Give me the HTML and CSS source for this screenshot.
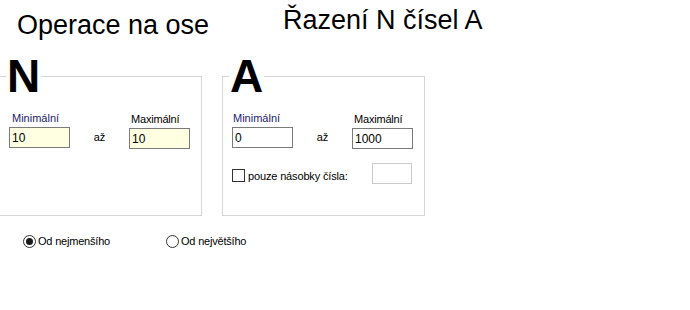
FILE: index.html
```html
<!DOCTYPE html>
<html lang="cs">
<head>
<meta charset="utf-8">
<title>Řazení N čísel A</title>
<link rel="stylesheet" href="styles.css">
</head>
<body>
<div class="header">
  <div class="t1">Operace na ose</div>
  <div class="t2">Řazení N čísel A</div>
</div>
<div class="groups">
  <fieldset class="grp">
    <legend>N</legend>
    <div class="body">
      <div class="row">
        <div class="col">
          <label class="lbl min n">Minimální</label>
          <input class="inp yellow" type="text" value="10">
        </div>
        <div class="az">až</div>
        <div class="col max">
          <label class="lbl">Maximální</label>
          <input class="inp yellow" type="text" value="10">
        </div>
      </div>
    </div>
  </fieldset>
  <fieldset class="grp">
    <legend>A</legend>
    <div class="body">
      <div class="row">
        <div class="col">
          <label class="lbl min">Minimální</label>
          <input class="inp" type="text" value="0">
        </div>
        <div class="az">až</div>
        <div class="col max">
          <label class="lbl">Maximální</label>
          <input class="inp" type="text" value="1000">
        </div>
      </div>
      <div class="chkrow">
        <span class="chk"></span>
        <span class="chklbl">pouze násobky čísla:</span>
        <input class="small" type="text" value="">
      </div>
    </div>
  </fieldset>
</div>
<div class="radios">
  <div class="opt first"><span class="radio on"></span><span class="rlbl">Od nejmenšího</span></div>
  <div class="opt"><span class="radio"></span><span class="rlbl">Od největšího</span></div>
</div>
</body>
</html>
```
FILE: styles.css
```css
html, body {
  margin: 0;
  padding: 0;
  background: #ffffff;
  color: #000000;
  font-family: "Liberation Sans", Arial, sans-serif;
}

.header {
  display: grid;
  grid-template-columns: 283px auto;
  height: 53px;
  font-size: 27px;
  line-height: 27px;
}

.t1 {
  padding-left: 17px;
  margin-top: 12px;
}

.t2 {
  margin-top: 7px;
}

.groups {
  display: flex;
  gap: 20px;
  margin-left: -1px;
}

.grp {
  width: 203px;
  box-sizing: border-box;
  margin: 0;
  padding: 0;
  min-width: 0;
  border: 1px solid #d5d5d5;
}

.grp legend {
  margin-left: 6px;
  padding: 0 1px;
  font-weight: bold;
  font-size: 46px;
  line-height: 46px;
}

.body {
  box-sizing: border-box;
  height: 116px;
  padding: 13px 0 0 9px;
}

.row {
  display: flex;
  align-items: flex-start;
}

.col {
  width: 61px;
}

.col.max {
  margin-top: 1px;
}

.az {
  width: 59px;
  align-self: flex-end;
  margin-bottom: 5px;
  text-align: center;
  font-size: 11px;
  line-height: 13px;
}

.lbl {
  display: block;
  font-size: 11px;
  line-height: 13px;
  letter-spacing: -0.2px;
  padding-left: 2px;
  white-space: nowrap;
}

.lbl.min {
  color: #1c2270;
  padding-left: 1px;
  letter-spacing: 0;
}

.lbl.min.n {
  padding-left: 3px;
}

.inp {
  display: block;
  width: 61px;
  height: 21px;
  box-sizing: border-box;
  margin: 2px 0 0 0;
  padding: 0 0 0 2px;
  border: 1px solid #7a7a7a;
  border-radius: 0;
  background: #ffffff;
  font-family: "Liberation Sans", Arial, sans-serif;
  font-size: 12px;
  color: #000000;
  outline: none;
}

.inp.yellow {
  background: #ffffe1;
}

.chkrow {
  display: flex;
  align-items: flex-end;
  width: 181px;
  margin-top: 14px;
}

.chk {
  width: 13px;
  height: 13px;
  box-sizing: border-box;
  border: 1px solid #333333;
  background: #ffffff;
  margin-bottom: 2px;
  flex: none;
}

.chklbl {
  font-size: 11px;
  line-height: 13px;
  letter-spacing: -0.15px;
  margin-left: 3px;
  margin-bottom: 1px;
  white-space: nowrap;
}

.small {
  margin-left: auto;
  margin-right: 1px;
  width: 40px;
  height: 21px;
  box-sizing: border-box;
  padding: 0;
  border: 1px solid #cbcbcb;
  border-radius: 0;
  background: #ffffff;
  outline: none;
}

.radios {
  display: flex;
  padding-left: 23px;
  margin-top: 19px;
}

.opt {
  display: flex;
  align-items: center;
  gap: 2px;
}

.opt.first {
  width: 143px;
}

.radio {
  width: 13px;
  height: 13px;
  box-sizing: border-box;
  border: 1px solid #333333;
  border-radius: 50%;
  background: #ffffff;
  flex: none;
}

.radio.on::after {
  content: "";
  display: block;
  width: 7px;
  height: 7px;
  margin: 2px;
  border-radius: 50%;
  background: #1a1a1a;
}

.rlbl {
  font-size: 11px;
  line-height: 13px;
  letter-spacing: -0.2px;
  white-space: nowrap;
}
```
